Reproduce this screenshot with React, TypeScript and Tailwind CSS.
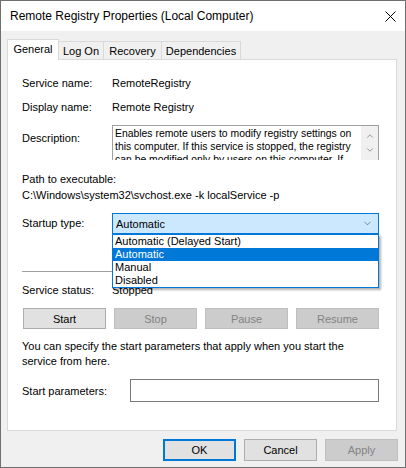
import { ChevronDown, ChevronUp } from "lucide-react";

const tabs = [
  { label: "General", w: "w-[52px]", active: true },
  { label: "Log On", w: "w-[45px]" },
  { label: "Recovery", w: "w-[58px]" },
  { label: "Dependencies", w: "w-[79px]" },
];

const options = ["Automatic (Delayed Start)", "Automatic", "Manual", "Disabled"];

function Btn({ label, disabled, primary, w }: { label: string; disabled?: boolean; primary?: boolean; w: string }) {
  if (disabled) {
    return (
      <div className={`${w} flex items-center justify-center border border-[#bfbfbf] bg-[#cccccc] text-[#838383]`}>
        {label}
      </div>
    );
  }
  return (
    <div
      className={`${w} flex items-center justify-center bg-[#e1e1e1] ${
        primary ? "border-2 border-[#0078d7]" : "border border-[#adadad]"
      }`}
    >
      {label}
    </div>
  );
}

export default function App() {
  return (
    <div
      className="w-[406px] h-[468px] border border-[#6f6f6f] bg-[#f0f0f0] flex flex-col text-[11px] text-black"
      style={{ fontFamily: '"Liberation Sans", Arial, sans-serif' }}
    >
      {/* Title bar */}
      <div className="h-[30px] bg-white flex items-center justify-between pl-[9px] pr-[9px]">
        <span className="text-[12px] leading-none">Remote Registry Properties (Local Computer)</span>
        <svg width="11" height="11" viewBox="0 0 11 11">
          <path d="M0.5 0.5 L10.5 10.5 M10.5 0.5 L0.5 10.5" stroke="#000" strokeWidth="1" />
        </svg>
      </div>

      {/* Tabs */}
      <div className="mt-[7px] ml-[6px] flex items-end h-[21px]">
        {tabs.map((t) =>
          t.active ? (
            <div
              key={t.label}
              className={`${t.w} h-[21px] bg-white border border-b-0 border-[#d9d9d9] flex items-center justify-center pb-[1px] relative z-10 -mb-px`}
            >
              {t.label}
            </div>
          ) : (
            <div
              key={t.label}
              className={`${t.w} h-[18px] bg-[#f0f0f0] border border-l-0 border-b-0 border-[#d9d9d9] flex items-center justify-center pt-[1px]`}
            >
              {t.label}
            </div>
          )
        )}
      </div>

      {/* Tab panel */}
      <div className="ml-[6px] w-[390px] h-[372px] bg-white border border-[#d9d9d9] pl-[14px] pr-[17px] flex flex-col leading-[14px]">
        <div className="mt-[16px] flex">
          <span className="w-[90px]">Service name:</span>
          <span>RemoteRegistry</span>
        </div>
        <div className="mt-[10px] flex">
          <span className="w-[90px]">Display name:</span>
          <span>Remote Registry</span>
        </div>

        <div className="mt-[11px] flex items-start">
          <span className="w-[90px] mt-[6px]">Description:</span>
          <div className="w-[267px] h-[35px] border-t border-l border-r border-[#a0a0a0] flex overflow-hidden">
            <div className="flex-1 pl-[2px] pt-px text-[10.4px] leading-[13px] overflow-hidden whitespace-nowrap">
              <div>Enables remote users to modify registry settings on</div>
              <div>this computer. If this service is stopped, the registry</div>
              <div>can be modified only by users on this computer. If</div>
            </div>
            <div className="w-[17px] bg-[#f0f0f0] flex flex-col items-center pt-[5px] gap-[4px] text-[#606060]">
              <ChevronUp size={10} strokeWidth={1.5} />
              <ChevronDown size={10} strokeWidth={1.5} />
            </div>
          </div>
        </div>

        <div className="mt-[12px]">Path to executable:</div>
        <div className="mt-[2px]">C:\Windows\system32\svchost.exe -k localService -p</div>

        <div className="mt-[11px] flex items-start">
          <span className="w-[90px] mt-[3px]">Startup type:</span>
          <div className="relative w-[267px]">
            <div className="h-[21px] bg-[#cce8ff] border border-[#0078d7] flex items-center justify-between pl-[3px] pr-[5px]">
              <span>Automatic</span>
              <ChevronDown size={11} strokeWidth={1.25} className="text-[#404040]" />
            </div>
            <div className="absolute left-0 top-[21px] w-full border border-[#0078d7] bg-white z-20 shadow-[2px_2px_2px_rgba(0,0,0,0.3)]">
              {options.map((o) => (
                <div
                  key={o}
                  className={`h-[13px] leading-[13px] pl-[2px] ${o === "Automatic" ? "bg-[#0078d7] text-white" : ""}`}
                >
                  {o}
                </div>
              ))}
            </div>
          </div>
        </div>

        <div className="mt-[37px] h-px bg-[#a0a0a0]" />

        <div className="mt-[11px] flex">
          <span className="w-[90px]">Service status:</span>
          <span>Stopped</span>
        </div>

        <div className="mt-[11px] h-[21px] flex gap-[8px] pl-px">
          <Btn label="Start" w="w-[83px]" />
          <Btn label="Stop" w="w-[83px]" disabled />
          <Btn label="Pause" w="w-[83px]" disabled />
          <Btn label="Resume" w="w-[83px]" disabled />
        </div>

        <div className="mt-[10px] leading-[15px]">
          You can specify the start parameters that apply when you start the service from here.
        </div>

        <div className="mt-[10px] flex items-start">
          <span className="w-[108px] mt-[5px]">Start parameters:</span>
          <div className="w-[249px] h-[23px] border border-[#7a7a7a] bg-white" />
        </div>
      </div>

      {/* Bottom buttons */}
      <div className="mt-[8px] h-[22px] flex justify-end gap-[8px] pr-[7px]">
        <Btn label="OK" w="w-[73px]" primary />
        <Btn label="Cancel" w="w-[73px]" />
        <Btn label="Apply" w="w-[73px]" disabled />
      </div>
    </div>
  );
}
